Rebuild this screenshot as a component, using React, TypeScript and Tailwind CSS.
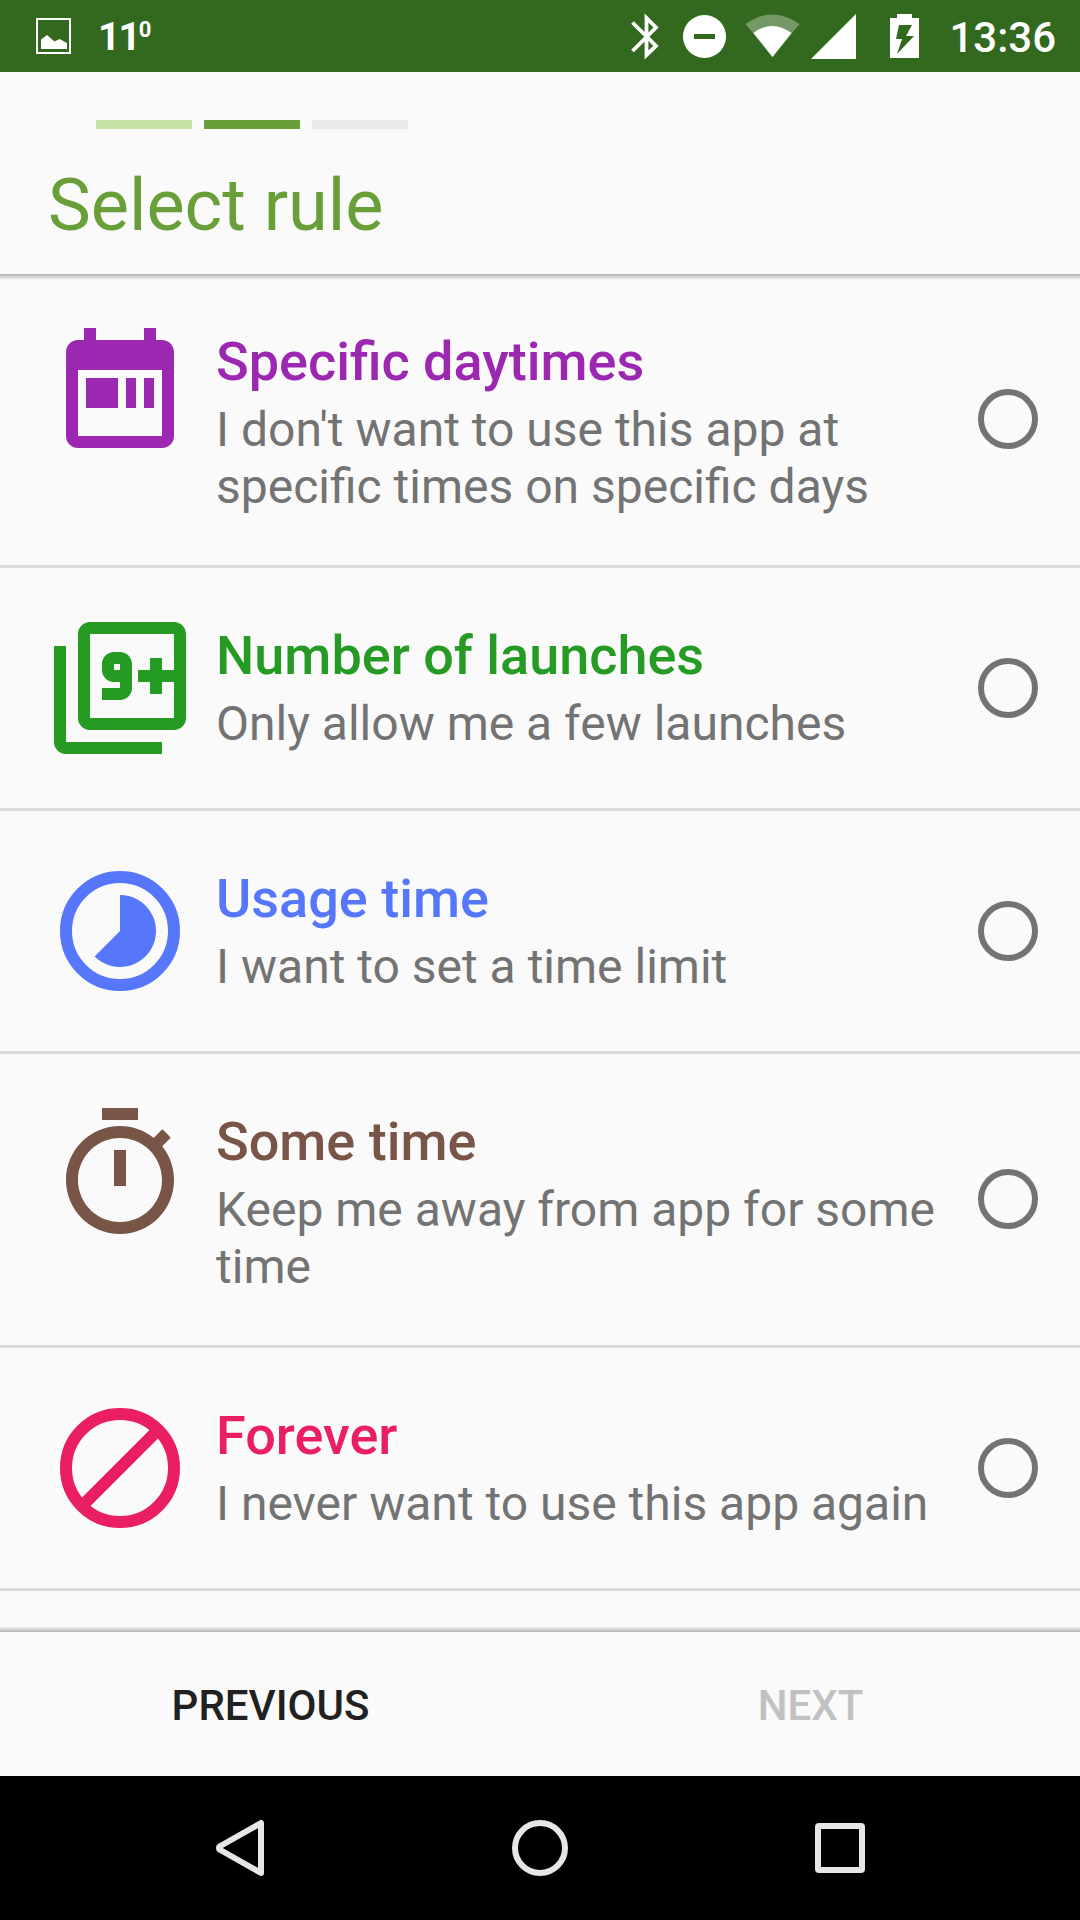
import type { ReactNode } from "react";

type Rule = {
  title: string;
  text: ReactNode;
  color: string;
  height: string;
  icon: ReactNode;
};

const rules: Rule[] = [
  {
    title: "Specific daytimes",
    text: "I don't want to use this app at specific times on specific days",
    color: "text-[#9c27b0]",
    height: "h-[294px]",
    icon: (
      <>
        <path
          fillRule="evenodd"
          d="M19 3h-1V1h-2v2H8V1H6v2H5c-1.11 0-1.99.9-1.99 2L3 19a2 2 0 0 0 2 2h14c1.1 0 2-.9 2-2V5c0-1.1-.9-2-2-2zm0 16H5V8h14v11z"
        />
        <path d="M6.33 9.33h5.34v5H6.33zM13 9.33h1.67v5H13zM16 9.33h1.67v5H16z" />
      </>
    ),
  },
  {
    title: "Number of launches",
    text: "Only allow me a few launches",
    color: "text-[#259b24]",
    height: "h-[243px]",
    icon: (
      <>
        <path d="M3 5H1v16c0 1.1.9 2 2 2h16v-2H3V5z" />
        <path d="M14 12V8c0-1.11-.9-2-2-2h-1a2 2 0 0 0-2 2v1c0 1.11.9 2 2 2h1v1H9v2h3c1.1 0 2-.89 2-2zm-3-3V8h1v1h-1z" />
        <path d="M21 1H7c-1.1 0-2 .9-2 2v14c0 1.1.9 2 2 2h14c1.1 0 2-.9 2-2V3c0-1.1-.9-2-2-2zm0 8h-2V7h-2v2h-2v2h2v2h2v-2h2v6H7V3h14v6z" />
      </>
    ),
  },
  {
    title: "Usage time",
    text: "I want to set a time limit",
    color: "text-[#5677fc]",
    height: "h-[243px]",
    icon: (
      <>
        <circle cx="12" cy="12" r="9" fill="none" stroke="currentColor" strokeWidth="2" />
        <path d="M12 6v6l-4.24 4.24A6 6 0 1 0 12 6z" />
      </>
    ),
  },
  {
    title: "Some time",
    text: "Keep me away from app for some time",
    color: "text-[#795548]",
    height: "h-[294px]",
    icon: (
      <path d="M15 1H9v2h6V1zm-4 13h2V8h-2v6zm8.03-6.61l1.42-1.42c-.43-.51-.9-.99-1.41-1.41l-1.42 1.42C16.07 4.74 14.12 4 12 4c-4.97 0-9 4.03-9 9s4.02 9 9 9 9-4.03 9-9c0-2.12-.74-4.07-1.97-5.61zM12 20c-3.87 0-7-3.13-7-7s3.13-7 7-7 7 3.13 7 7-3.13 7-7 7z" />
    ),
  },
  {
    title: "Forever",
    text: "I never want to use this app again",
    color: "text-[#e91e63]",
    height: "h-[243px]",
    icon: (
      <g fill="none" stroke="currentColor" strokeWidth="2">
        <circle cx="12" cy="12" r="9" />
        <path d="M5.3 18.7L18.7 5.3" />
      </g>
    ),
  },
];

function StatusBar() {
  return (
    <div className="flex h-[72px] shrink-0 items-start bg-[#33691e] text-white">
      <svg className="ml-[36px] mt-[18px] h-9 w-[35px]" viewBox="0 0 35 36" fill="currentColor">
        <rect x="1" y="1" width="33" height="34" fill="none" stroke="currentColor" strokeWidth="2" />
        <path d="M5 21.500l6-4.500 7.500 6.500 5-2.500 7.500 4v6H5z" />
      </svg>
      <div className="ml-[27px] mt-[17px] flex items-start font-bold">
        <span className="text-[39px] leading-[40px] tracking-[-2px]">11</span>
        <span className="text-[22px] leading-[26px]">0</span>
      </div>
      <svg className="ml-auto h-[72px] w-[325px]" viewBox="600 0 325 72" fill="currentColor">
        <path
          d="M632.500 22.500L656 46 646.500 55V18L656 27.500 632.500 51"
          fill="none"
          stroke="currentColor"
          strokeWidth="3.800"
        />
        <path fillRule="evenodd" d="M704.500 15a21.500 21.500 0 1 0 .01 0zM694 34h21v5h-21z" />
        <path d="M745.500 24Q772 5 799.500 24L772.500 57z" opacity=".32" />
        <path d="M753.500 33Q772 19 791.500 33L772.500 57z" />
        <path d="M856 14v45h-45z" />
        <path
          fillRule="evenodd"
          d="M897 14h15v4h7v40h-29V18h7zM899 25l-3 14h6l-5 15 17-18h-8l6-11z"
        />
      </svg>
      <span className="ml-[24px] mr-[24px] mt-[13px] text-[42px] font-medium leading-[50px]">13:36</span>
    </div>
  );
}

function RuleRow({ rule }: { rule: Rule }) {
  return (
    <label className={`flex shrink-0 border-b-[3px] border-[#dcdcdc] pl-12 ${rule.height}`}>
      <svg className={`mt-12 size-36 shrink-0 ${rule.color}`} viewBox="0 0 24 24" fill="currentColor">
        {rule.icon}
      </svg>
      <div className="ml-6 w-[738px] shrink-0 pt-[56px]">
        <h2 className={`text-[54px] font-medium leading-[64px] ${rule.color}`}>{rule.title}</h2>
        <p className="mt-[7px] text-[48px] leading-[57px] text-[#737373]">{rule.text}</p>
      </div>
      <span className="mb-px ml-6 size-[60px] shrink-0 self-center rounded-full border-[6px] border-[#737373]" />
    </label>
  );
}

export default function App() {
  return (
    <div className="flex h-[1920px] w-[1080px] flex-col overflow-hidden bg-[#fafafa] font-['Roboto',sans-serif]">
      <StatusBar />
      <header className="h-[202px] shrink-0 px-12 pt-12">
        <div className="ml-12 flex gap-3">
          <span className="h-[9px] w-24 bg-[#c5e1a5]" />
          <span className="h-[9px] w-24 bg-[#689f38]" />
          <span className="h-[9px] w-24 bg-[#e9e9e9]" />
        </div>
        <h1 className="mt-[35px] text-[72px] leading-[84px] text-[#689f38]">Select rule</h1>
      </header>
      <main className="relative flex h-[1358px] shrink-0 flex-col overflow-hidden">
        <div className="absolute inset-x-0 top-0 h-[6px] bg-linear-to-b from-[#b4b4b4] to-[#fafafa]" />
        {rules.map((rule) => (
          <RuleRow key={rule.title} rule={rule} />
        ))}
        <div className="absolute inset-x-0 bottom-0 h-[6px] bg-linear-to-t from-[#b4b4b4] to-[#fafafa]" />
      </main>
      <footer className="grid h-36 shrink-0 grid-cols-2 items-center text-center text-[42px] font-medium">
        <button className="pl-px pt-[2px] text-[#212121]">PREVIOUS</button>
        <button className="pl-px pt-[2px] text-[#c1c1c1]">NEXT</button>
      </footer>
      <nav className="h-36 shrink-0 bg-black">
        <svg className="h-36 w-full" viewBox="0 0 1080 144" fill="none" stroke="#e6e6e6" strokeWidth="6" strokeLinejoin="round">
          <path d="M261 47v50L219.500 73.500q-1-1.500 0-3z" />
          <circle cx="540" cy="72" r="25" />
          <rect x="818" y="50" width="44" height="44" rx="1" />
        </svg>
      </nav>
    </div>
  );
}
